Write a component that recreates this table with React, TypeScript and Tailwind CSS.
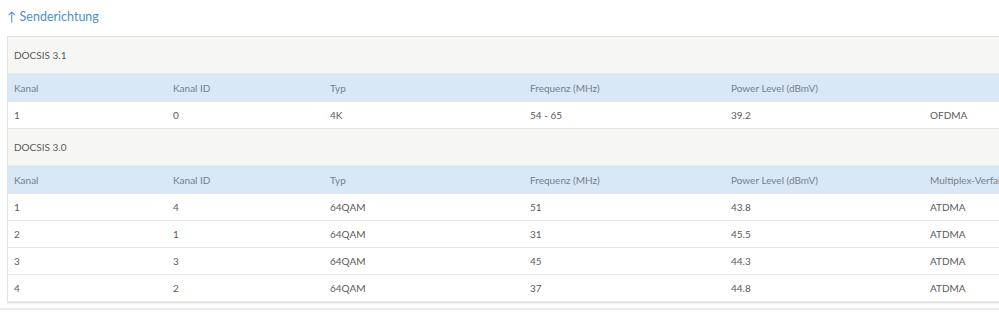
const cols = ["w-[159px]", "w-[157px]", "w-[200px]", "w-[201px]", "w-[199px]", "w-[120px]"];

const head31 = ["Kanal", "Kanal ID", "Typ", "Frequenz (MHz)", "Power Level (dBmV)", ""];
const rows31 = [["1", "0", "4K", "54 - 65", "39.2", "OFDMA"]];

const head30 = ["Kanal", "Kanal ID", "Typ", "Frequenz (MHz)", "Power Level (dBmV)", "Multiplex-Verfahren"];
const rows30 = [
  ["1", "4", "64QAM", "51", "43.8", "ATDMA"],
  ["2", "1", "64QAM", "31", "45.5", "ATDMA"],
  ["3", "3", "64QAM", "45", "44.3", "ATDMA"],
  ["4", "2", "64QAM", "37", "44.8", "ATDMA"],
];

const Row = ({ cells, className }: { cells: string[]; className: string }) => (
  <div className={`flex ${className}`}>
    {cells.map((c, i) => (
      <div key={i} className={`${cols[i]} shrink-0 px-[6px] whitespace-nowrap`}>
        {c}
      </div>
    ))}
  </div>
);

const Section = ({ title, head, rows }: { title: string; head: string[]; rows: string[][] }) => (
  <>
    <div className="h-[37px] flex items-center px-[6px] bg-[#f6f6f4] text-[#5a5a5a] border-b border-[#ebebe8]">
      {title}
    </div>
    <Row cells={head} className="h-[28px] items-center bg-[#d9e8f6] text-[#74808c]" />
    {rows.map((r, i) => (
      <Row key={i} cells={r} className="h-[27px] items-center bg-white text-[#5a5a5a] border-b border-[#e6e6e6]" />
    ))}
  </>
);

export default function App() {
  return (
    <div className="w-[999px] h-[319px] overflow-hidden bg-white font-['Lato',sans-serif]">
      <div className="pl-[7px] pt-[8px]">
        <div className="text-[12.5px] text-[#4f8fc6] h-[28px] leading-[18px]">↑ Senderichtung</div>
        <div className="w-[1100px] border border-[#e3e3e0] text-[10px] shadow-[0_1px_1px_rgba(0,0,0,0.04)]">
          <Section title="DOCSIS 3.1" head={head31} rows={rows31} />
          <Section title="DOCSIS 3.0" head={head30} rows={rows30} />
        </div>
      </div>
      <div className="mt-[5px] border-t-2 border-[#ececec]" />
    </div>
  );
}
